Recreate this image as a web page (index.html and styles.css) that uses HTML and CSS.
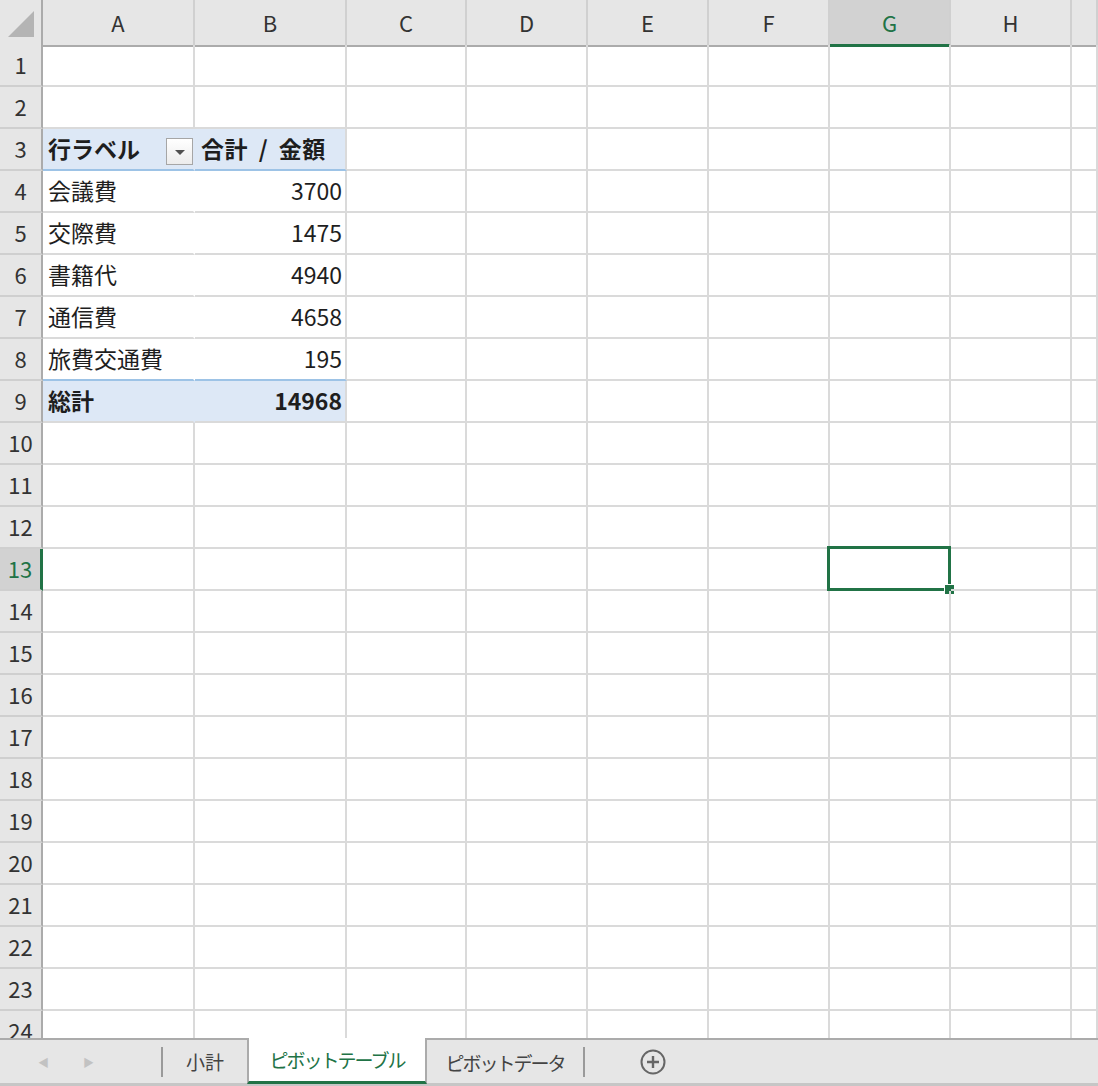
FILE: index.html
```html
<!DOCTYPE html>
<html lang="ja">
<head>
    <meta charset="UTF-8">
    <meta name="viewport" content="width=device-width, initial-scale=1.0">
    <title>ピボットテーブル</title>

    <link rel="stylesheet" href="styles.css">
</head>
<body>
    <div id="book">
        <!-- grid: column headers + rows, filled by the script below -->
        <div id="sheet"></div>

        <!-- sheet tabs -->
        <div id="tabs">
            <div class="tab-nav">
                <span class="nav-arrow">&#9664;</span>
                <span class="nav-arrow">&#9654;</span>
            </div>
            <div class="tab">小計</div>
            <div class="tab active kana">ピボットテーブル</div>
            <div class="tab last kana">ピボットデータ</div>
            <div class="tab-add">
                <svg width="28" height="28" viewBox="0 0 28 28">
                    <circle cx="14" cy="14" r="11.5" fill="none" stroke="#666" stroke-width="2"/>
                    <path d="M14 8v12M8 14h12" stroke="#666" stroke-width="2.4"/>
                </svg>
            </div>
        </div>
    </div>

    <script>
        const columns = ["A", "B", "C", "D", "E", "F", "G", "H", ""];
        const activeCol = "G";
        const activeRow = 13;

        // pivot: row 3 header, rows 4-8 items, row 9 grand total
        const pivot = {
            3: ["行ラベル", "合計 / 金額"],
            4: ["会議費", "3700"],
            5: ["交際費", "1475"],
            6: ["書籍代", "4940"],
            7: ["通信費", "4658"],
            8: ["旅費交通費", "195"],
            9: ["総計", "14968"]
        };

        const sheet = document.getElementById("sheet");

        function row(cls) {
            const r = document.createElement("div");
            r.className = "row " + (cls || "");
            sheet.appendChild(r);
            return r;
        }
        function cell(parent, cls, text) {
            const c = document.createElement("div");
            c.className = "cell " + (cls || "");
            if (text) c.textContent = text;
            parent.appendChild(c);
            return c;
        }

        // column header row
        const head = row("head-row");
        const corner = cell(head, "corner");
        corner.innerHTML = '<svg width="30" height="30" viewBox="0 0 30 30"><path d="M28 2V28H2Z" fill="#b4b4b4"/></svg>';
        columns.forEach(name => {
            cell(head, "col-head" + (name === activeCol ? " selected" : ""), name);
        });

        for (let r = 1; r <= 24; r++) {
            const line = row();
            cell(line, "row-head" + (r === activeRow ? " selected" : ""), String(r));
            columns.forEach((name, i) => {
                let cls = "";
                let text = "";
                if (pivot[r] && i < 2) {
                    text = pivot[r][i];
                    if (r === 3) cls = "pv-head";
                    else if (r === 9) cls = "pv-total";
                    else cls = "pv-item";
                    if (r === 8) cls += " pv-last";
                    cls += i === 0 ? " pv-label" : " pv-value";
                }
                const c = cell(line, cls, text);
                if (r === 3 && i === 0) {
                    c.insertAdjacentHTML("beforeend", '<span class="filter"><span class="filter-arrow"></span></span>');
                }
                if (r === activeRow && name === activeCol) {
                    c.insertAdjacentHTML("beforeend", '<span class="selection"><span class="handle"></span></span>');
                }
            });
        }
    </script>
</body>
</html>
```

FILE: styles.css
```css
html, body {
    margin: 0;
    padding: 0;
    background-color: #ffffff;
    overflow: hidden;
}
body {
    font-family: "Noto Sans CJK JP", "Noto Sans", sans-serif;
    color: #1e1e1e;
}
#book {
    width: 1098px;
    height: 1086px;
    display: flex;
    flex-direction: column;
}
#sheet {
    height: 1038px;
    overflow: hidden;
}
.row {
    display: grid;
    grid-template-columns: 43px 152px 152px 120px 121px 121px 121px 121px 121px 26px;
    height: 42px;
}
.head-row {
    height: 45px;
}
.cell {
    box-sizing: border-box;
    border-right: 2px solid #dadada;
    border-bottom: 2px solid #dadada;
    font-size: 23px;
    line-height: 38px;
    white-space: nowrap;
    position: relative;
}

/* headers */
.corner, .col-head, .row-head {
    background-color: #e6e6e6;
    color: #333333;
    text-align: center;
}
.corner {
    border-right: 2px solid #ababab;
    border-bottom: 2px solid #ababab;
    display: flex;
    align-items: flex-end;
    justify-content: flex-end;
    padding: 0 5px 6px 0;
}
.corner svg {
    display: block;
}
.col-head {
    border-right: 2px solid #d0d0d0;
    border-bottom: 2px solid #ababab;
    font-size: 22px;
    line-height: 44px;
}
.row-head {
    border-right: 2px solid #ababab;
    border-bottom: 2px solid #cfcfcf;
    font-size: 22px;
}
.col-head.selected {
    background-color: #d2d2d2;
    color: #217346;
    border-bottom: 3px solid #217346;
}
.row-head.selected {
    background-color: #d2d2d2;
    color: #217346;
    border-right: 3px solid #217346;
}

/* pivot table */
.pv-label {
    padding-left: 5px;
    border-right-color: #ffffff;
}
.pv-value {
    padding-right: 3px;
    text-align: right;
}
.pv-head, .pv-total {
    background-color: #dde8f6;
    font-weight: bold;
}
.pv-head {
    border-bottom-color: #9dc3e6;
}
.pv-head.pv-value {
    text-align: left;
    padding-left: 6px;
    word-spacing: 5px;
    letter-spacing: 0.5px;
}
.pv-last {
    border-bottom-color: #9dc3e6;
}
.pv-head.pv-label, .pv-total.pv-label {
    border-right-color: #dde8f6;
}
.filter {
    position: absolute;
    right: 0;
    top: 9px;
    width: 27px;
    height: 27px;
    box-sizing: border-box;
    border: 1px solid #a6a6a6;
    background: linear-gradient(#ffffff, #ececec);
}
.filter-arrow {
    position: absolute;
    left: 8px;
    top: 11px;
    border-left: 5px solid transparent;
    border-right: 5px solid transparent;
    border-top: 5px solid #505050;
}

/* active cell */
.selection {
    position: absolute;
    left: -3px;
    top: -3px;
    right: -2px;
    bottom: -2px;
    border: 3px solid #217346;
}
.handle {
    position: absolute;
    right: -7px;
    bottom: -7px;
    width: 9px;
    height: 9px;
    background-color: #217346;
    border: 1px solid #ffffff;
}

/* sheet tabs */
#tabs {
    height: 48px;
    box-sizing: border-box;
    background-color: #e6e6e6;
    border-top: 2px solid #ababab;
    border-bottom: 3px solid #c6c6c6;
    display: flex;
    align-items: stretch;
    font-size: 19px;
    color: #444444;
    white-space: nowrap;
}
.tab-nav {
    width: 163px;
    display: flex;
    align-items: center;
    gap: 34px;
    padding-left: 38px;
    box-sizing: border-box;
    border-right: 2px solid #9a9a9a;
    margin: 7px 0 6px 0;
    color: #c2c2c2;
    font-size: 11px;
}
.tab {
    display: flex;
    align-items: center;
    justify-content: center;
    width: 84px;
    box-sizing: border-box;
}
.kana {
    letter-spacing: -2px;
}
.tab.active {
    width: 180px;
    background-color: #ffffff;
    color: #217346;
    margin-top: -2px;
    border-left: 2px solid #ababab;
    border-right: 2px solid #ababab;
    border-bottom: 3px solid #217346;
    margin-bottom: -1px;
}
.tab.last {
    width: 158px;
    margin: 7px 0 6px 0;
    border-right: 2px solid #9a9a9a;
}
.tab-add {
    display: flex;
    align-items: center;
    padding-left: 54px;
}
.tab-add svg {
    display: block;
}
```
